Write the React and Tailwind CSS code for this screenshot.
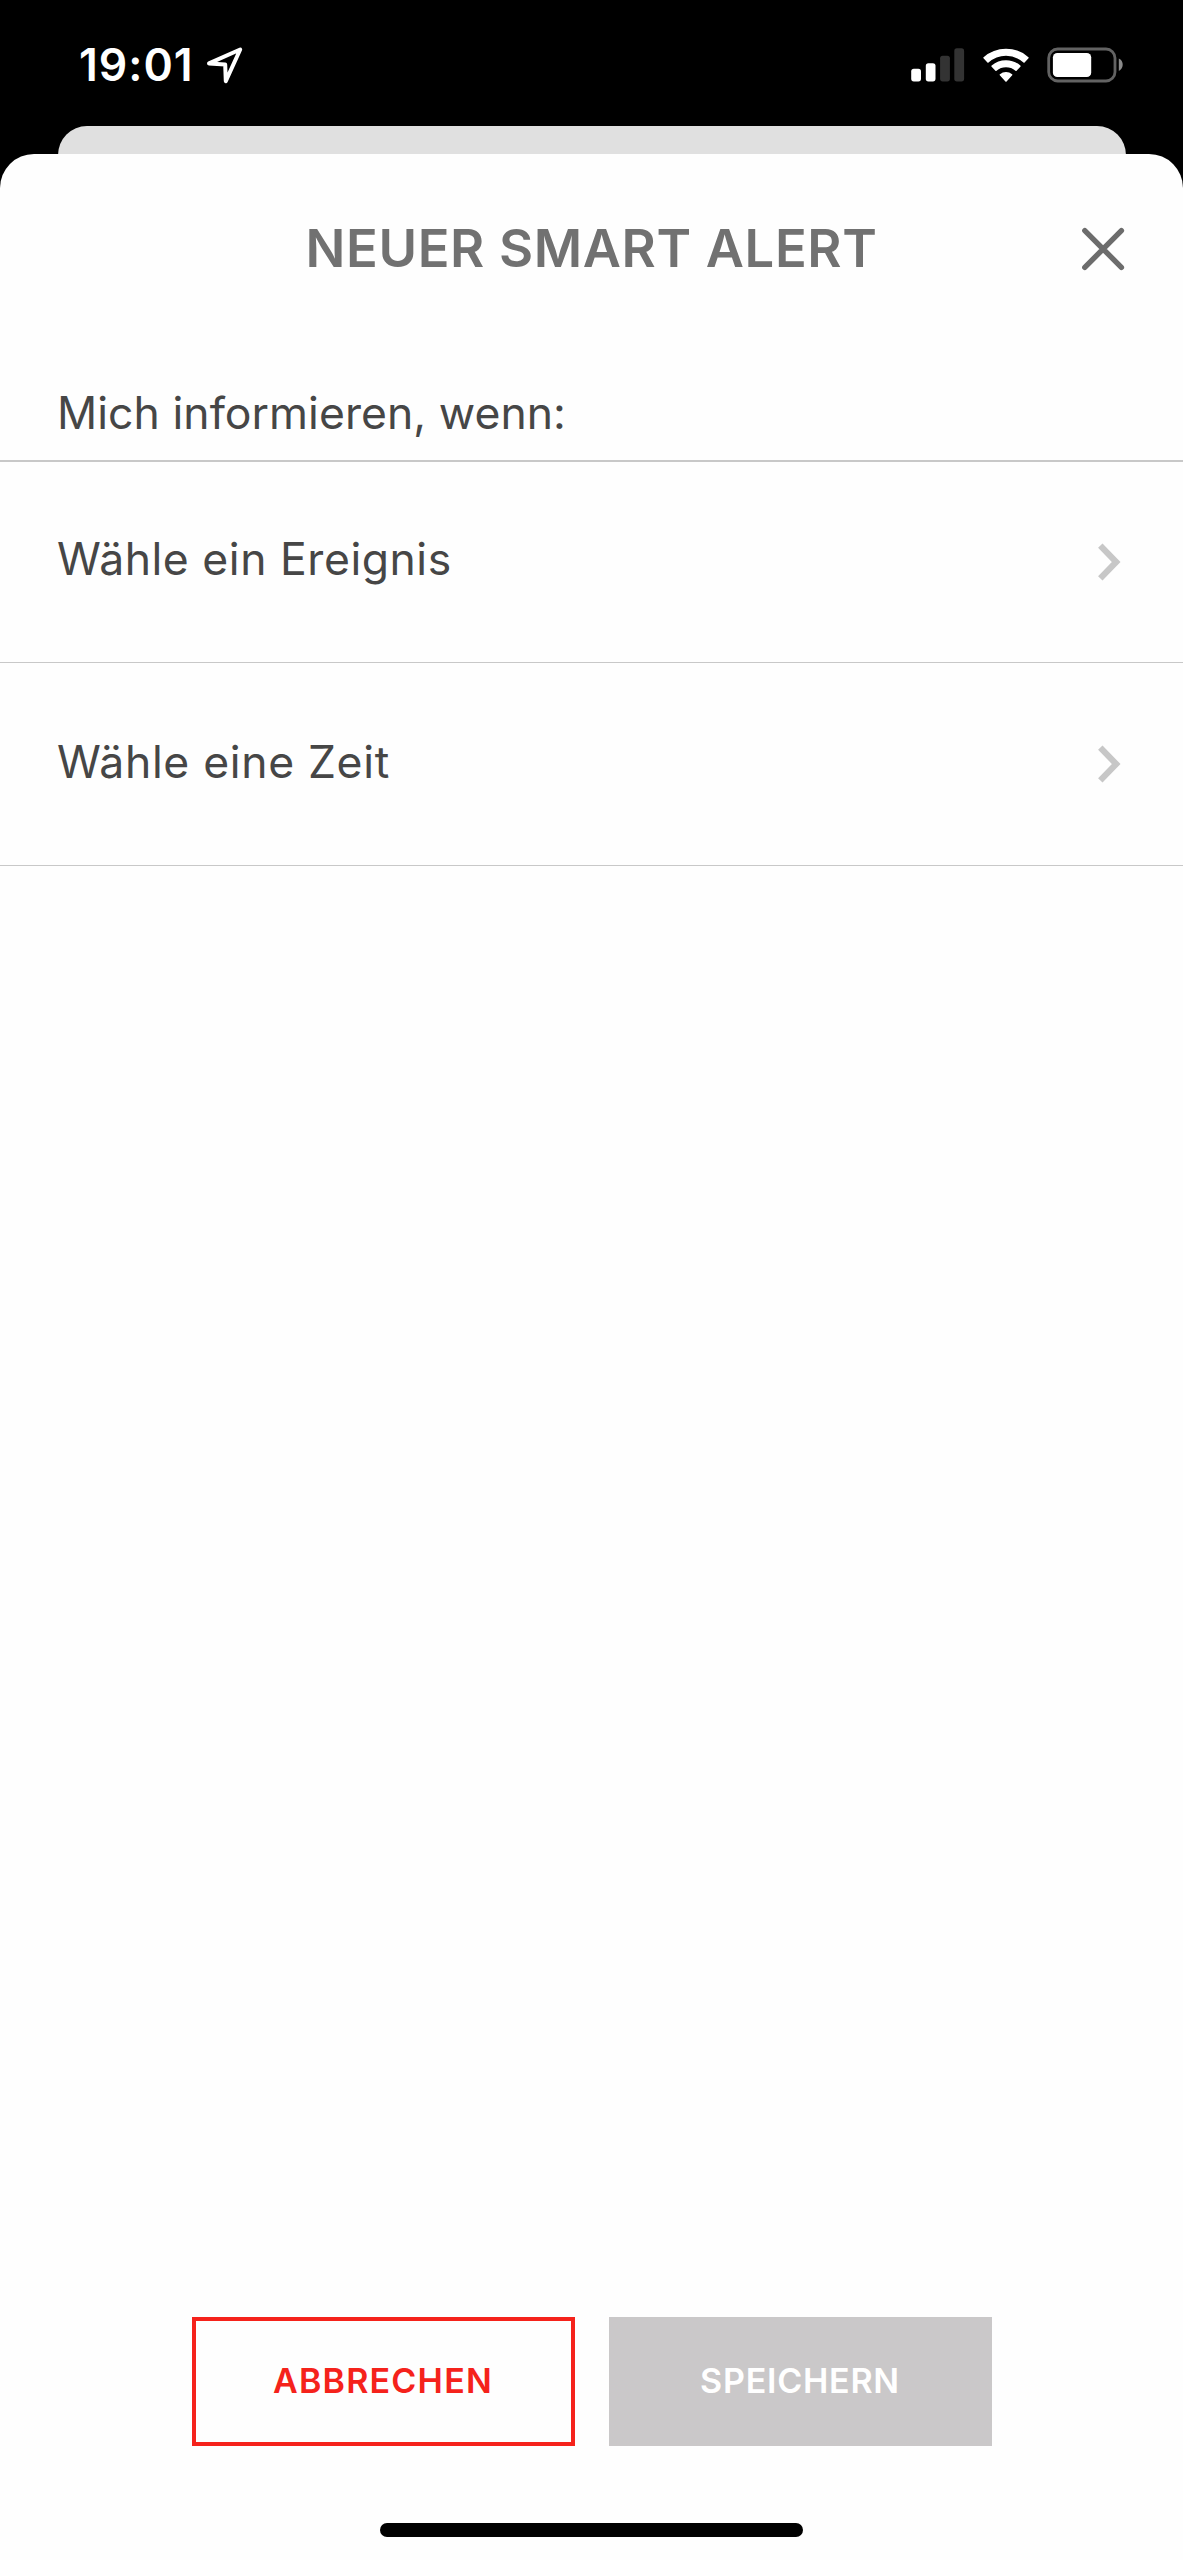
function LocationArrow() {
  return (
    <svg className="ml-[15px] h-[40px] w-[40px]" viewBox="205 45 40 40" fill="none" stroke="#fff" strokeWidth="4" strokeLinejoin="round">
      <path d="M209 63.4 240.2 49.5 225.8 81.1 225.2 64.6Z" />
    </svg>
  );
}

function Signal() {
  return (
    <svg className="h-[34px] w-[54px]" viewBox="0 0 54 34">
      <rect x="0.2" y="20.8" width="9.8" height="12.6" rx="2.6" fill="#fff" />
      <rect x="14.8" y="15.2" width="9.7" height="18.2" rx="2.6" fill="#fff" />
      <rect x="29.1" y="7.7" width="9.8" height="25.7" rx="2.6" fill="#333" />
      <rect x="43.3" y="0.3" width="9.8" height="33.1" rx="2.6" fill="#333" />
    </svg>
  );
}

function Wifi() {
  return (
    <svg className="ml-[17px] h-[36px] w-[48px]" viewBox="-24 -35 48 36" fill="#fff" stroke="#fff" strokeWidth="1.6" strokeLinejoin="round">
      <path d="M-21.9 -24.2A32.9 32.9 0 0 1 21.9 -24.2L18 -20A26.4 26.4 0 0 0 -18 -20Z" />
      <path d="M-13.8 -15.8A20.9 20.9 0 0 1 13.8 -15.8L10 -11.8A15.6 15.6 0 0 0 -10 -11.8Z" />
      <path d="M-5.6 -7.2A9.2 9.2 0 0 1 5.6 -7.2L0 -1.1Z" />
    </svg>
  );
}

function Battery() {
  return (
    <svg className="ml-[17px] h-[36px] w-[77px]" viewBox="0 0 77 36">
      <rect x="1.7" y="2" width="66.3" height="32" rx="9" fill="none" stroke="#636363" strokeWidth="2.8" />
      <rect x="5.9" y="5.9" width="38.3" height="24.2" rx="4.4" fill="#fff" />
      <path d="M71.8 11.6C77 14 77 21.6 71.8 24Z" fill="#8a8a8a" />
    </svg>
  );
}

function StatusBar() {
  return (
    <header className="flex h-[126px] shrink-0 items-start justify-between pl-[79px] pr-[59px] pt-[45px] text-white">
      <div className="flex h-[40px] items-center">
        <span className="w-[111px] whitespace-nowrap text-[44.5px] font-semibold leading-none tracking-[1px]">19:01</span>
        <LocationArrow />
      </div>
      <div className="flex h-[39px] items-center">
        <Signal />
        <Wifi />
        <Battery />
      </div>
    </header>
  );
}

function Chevron() {
  return (
    <svg className="h-[38px] w-[24px]" viewBox="0 0 24 38" fill="none" stroke="#c7c7c7" strokeWidth="6.2">
      <path d="M2.3 2.6 18.2 19 2.3 35.4" />
    </svg>
  );
}

export default function App() {
  return (
    <div className="flex h-[2560px] w-full flex-col bg-black font-['Inter',sans-serif]">
      <StatusBar />
      <div className="mx-[57.5px] -mb-8 h-[60px] shrink-0 rounded-t-[29px] bg-[#e0e0e0]" />
      <main className="relative flex grow flex-col rounded-t-[34px] bg-[#fefefe] text-[#464646]">
        <div className="grid h-[189px] shrink-0 grid-cols-[1fr_auto_1fr] items-center">
          <h1 className="col-start-2 whitespace-nowrap text-[52.5px] font-semibold leading-none tracking-[0.65px] text-[#717171]">NEUER SMART ALERT</h1>
          <button className="mr-[58px] justify-self-end" aria-label="Schließen">
            <svg className="h-[44px] w-[44px]" viewBox="0 0 44 44" fill="none" stroke="#6c6c6c" strokeWidth="5.4" strokeLinecap="round">
              <path d="M3.8 3.6 40.4 40.4M40.4 3.6 3.8 40.4" />
            </svg>
          </button>
        </div>

        <p className="flex h-[119px] shrink-0 items-center border-b-2 border-[#c8c8c8] pl-[57px] pt-[24px] text-[44.5px] leading-none tracking-[0.05px]">
          Mich informieren, wenn:
        </p>
        <button className="flex h-[201px] shrink-0 items-center justify-between border-b border-[#c8c8c8] pb-px pl-[57px] pr-[61px] text-[44.5px] leading-none">
          <span className="pb-[5px] tracking-[0.54px]">Wähle ein Ereignis</span>
          <Chevron />
        </button>
        <button className="flex h-[203px] shrink-0 items-center justify-between border-b border-[#c8c8c8] pl-[57px] pr-[61px] text-[44.5px] leading-none">
          <span className="pb-[4px] tracking-[0.67px]">Wähle eine Zeit</span>
          <Chevron />
        </button>

        <div className="mt-auto flex shrink-0 justify-center gap-[34px] text-[34px] font-semibold leading-none">
          <button className="flex h-[129px] w-[383px] items-center justify-center border-4 border-[#f5221b] pb-[2px] tracking-[1.2px] text-[#f5221b]">ABBRECHEN</button>
          <button className="flex h-[129px] w-[383px] items-center justify-center bg-[#cac8c9] pb-[2px] tracking-[0.75px] text-white">SPEICHERN</button>
        </div>
        <div className="mx-auto mb-[23px] mt-[77px] h-[14px] w-[423px] shrink-0 rounded-full bg-black" />
      </main>
    </div>
  );
}
